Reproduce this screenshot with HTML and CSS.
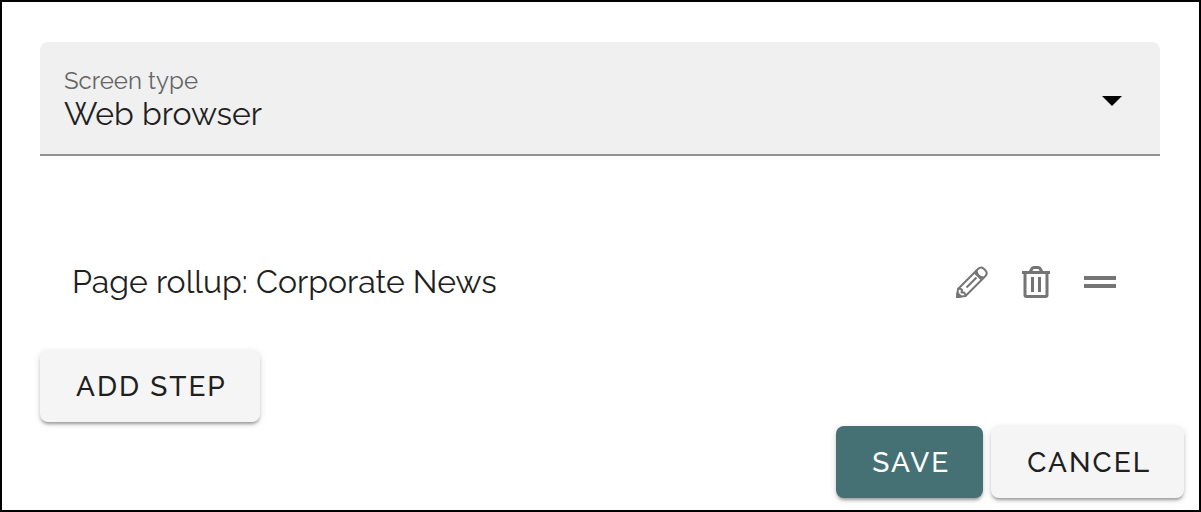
FILE: index.html
```html
<!DOCTYPE html>
<html lang="en">
<head>
<meta charset="utf-8">
<meta name="viewport" content="width=device-width, initial-scale=1">
<title>Screen type</title>
<link rel="stylesheet" href="styles.css">
</head>
<body>
<form class="panel">
  <div class="field">
    <label class="field-label" for="screen-type">Screen type</label>
    <select class="field-select" id="screen-type">
      <option>Web browser</option>
    </select>
    <svg class="field-arrow" viewBox="0 0 20 10" aria-hidden="true"><path d="M0 0h20L10 10z"/></svg>
  </div>
  <div class="step">
    <span class="step-name">Page rollup: Corporate News</span>
    <div class="step-tools">
      <button class="tool" type="button" aria-label="Edit">
        <svg viewBox="0 0 32 32" fill="none" stroke="currentColor" stroke-width="2" stroke-linejoin="round" aria-hidden="true">
          <path d="M1 31 2 23 22 3C24 1 25.500 .8 27.500 2.500L29.500 4.500C31.300 6.500 31.200 8 29.500 10L9.500 30Z"/>
          <path d="M20.500 4.500C21 8.500 23.500 11 27.500 11.500M18.500 6.500 25.500 13.500M2 23C4 22.500 5.500 23 6 24L5.500 26.500 8 26.500C9 27.500 9.700 28.500 9.500 30M10.500 21.500 20.500 11.500"/>
          <path d="M1 31 1.500 27 5 30.500Z" fill="currentColor"/>
        </svg>
      </button>
      <button class="tool" type="button" aria-label="Delete">
        <svg viewBox="0 0 32 32" fill="none" stroke="currentColor" stroke-width="3" aria-hidden="true">
          <path d="M2 6.500H30M5 6.500V29Q5 30.500 6.500 30.500H25.500Q27 30.500 27 29V6.500"/>
          <path d="M10 6 12 2.500Q12.500 1.500 14 1.500H18Q19.500 1.500 20 2.500L22 6"/>
          <path d="M12.500 11V26M19.500 11V26"/>
        </svg>
      </button>
      <button class="tool" type="button" aria-label="Reorder">
        <svg viewBox="0 0 32 32" fill="currentColor" aria-hidden="true"><path d="M0 10h32v4H0zM0 18h32v4H0z"/></svg>
      </button>
    </div>
  </div>
  <div class="add">
    <button class="button" type="button">ADD STEP</button>
  </div>
  <div class="actions">
    <button class="button button-primary" type="submit">SAVE</button>
    <button class="button" type="button">CANCEL</button>
  </div>
</form>
</body>
</html>
```
FILE: styles.css
```css
* {
  box-sizing: border-box;
}

body {
  margin: 0;
  background: #fff;
  color: #1f1f1f;
  font-family: Raleway, Lato, "Open Sans", sans-serif;
  font-size: 32px;
}

.panel {
  min-height: 100vh;
  padding: 40px 15px 12px 38px;
  border: 2px solid #000;
}

.field {
  position: relative;
  display: flex;
  flex-direction: column;
  margin-right: 24px;
  padding-top: 24px;
  border-bottom: 2px solid #919191;
  border-radius: 8px 8px 0 0;
  background: #f0f0f0;
}

.field-label {
  padding: 0 24px;
  color: #666;
  font-size: 24px;
  line-height: 30px;
}

.field-select {
  width: 100%;
  height: 58px;
  padding: 0 72px 22px 24px;
  border: 0;
  background: transparent;
  color: #1f1f1f;
  font: inherit;
  line-height: 36px;
  appearance: none;
}

.field-arrow {
  position: absolute;
  top: 54px;
  right: 38px;
  width: 20px;
  height: 10px;
  pointer-events: none;
}

.step {
  display: flex;
  align-items: center;
  justify-content: space-between;
  margin: 78px 68px 0 32px;
  height: 96px;
}

.step-name {
  padding-bottom: 2px;
}

.step-tools {
  display: flex;
  gap: 32px;
}

.tool {
  width: 32px;
  height: 32px;
  padding: 0;
  border: 0;
  background: none;
  color: #757575;
}

.tool svg {
  display: block;
}

.add {
  display: flex;
  margin-top: 20px;
}

.actions {
  display: flex;
  justify-content: flex-end;
  gap: 8px;
  margin-top: 4px;
}

.button {
  height: 72px;
  padding: 0 33px 0 36px;
  border: 0;
  border-radius: 8px;
  background: #f5f5f5;
  box-shadow: 0 3px 3px -1px rgba(0, 0, 0, 0.3), 0 2px 6px rgba(0, 0, 0, 0.16);
  color: #1f1f1f;
  font: inherit;
  font-size: 28px;
  font-weight: 500;
  letter-spacing: 2px;
}

.button-primary {
  background: #457175;
  color: #fff;
}
```
